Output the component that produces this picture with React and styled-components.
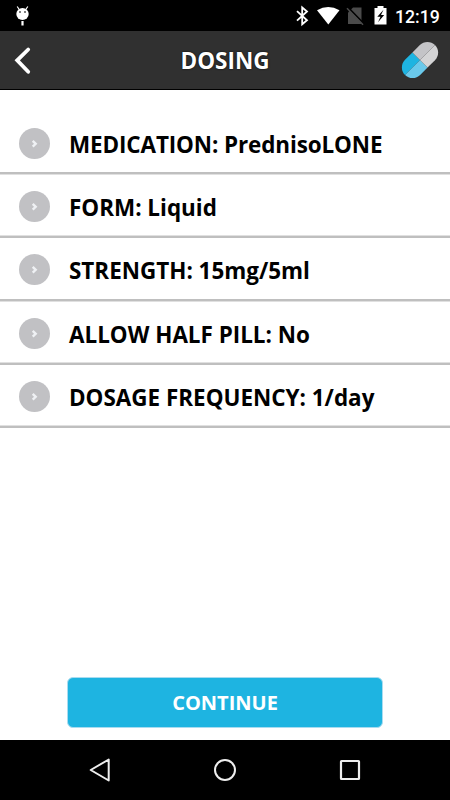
import React from "react";
import styled, { createGlobalStyle } from "styled-components";

const GlobalStyle = createGlobalStyle`
  *, *::before, *::after { box-sizing: border-box; }
  body { margin: 0; background: #fff; }
  svg { display: block; flex: none; }
`;

const Screen = styled.div`
  display: flex;
  flex-direction: column;
  width: 450px;
  height: 800px;
  overflow: hidden;
  background: #fff;
  font-family: "Open Sans", sans-serif;
`;

const StatusBar = styled.div`
  display: flex;
  align-items: center;
  justify-content: space-between;
  height: 31px;
  padding: 0 10px 0 14px;
  background: #000;
`;

const StatusIcons = styled.div`
  display: flex;
  align-items: center;
`;

const Clock = styled.span`
  width: 45px;
  margin-left: 8px;
  padding-top: 3px;
  color: #fff;
  font: 500 17.7px/31px Roboto, sans-serif;
  white-space: nowrap;
`;

const Header = styled.header`
  display: grid;
  grid-template-columns: 60px 1fr 60px;
  align-items: center;
  height: 59px;
  background: #303030;
  border-bottom: 1px solid #000;
`;

const Title = styled.h1`
  margin: 0;
  padding-top: 2px;
  color: #fff;
  font-size: 22.5px;
  font-weight: 700;
  line-height: 56px;
  text-align: center;
  text-shadow: 0 0 2px #000;
`;

const IconButton = styled.button`
  display: flex;
  padding: 0;
  border: 0;
  background: none;
`;

const List = styled.ul`
  flex: 1;
  margin: 0;
  padding: 22px 0 0;
  list-style: none;
`;

const Row = styled.li`
  display: flex;
  flex-direction: column;
  height: ${({ $height }) => $height}px;
`;

const RowContent = styled.div`
  display: flex;
  flex: 1;
  align-items: center;
  gap: 19px;
  padding: 2px 0 0 19px;
`;

const Divider = styled.div`
  height: 3px;
  background: linear-gradient(
    ${({ $softTop }) => ($softTop ? "to top" : "to bottom")},
    #bfbfbf 2px,
    #e0e0e0 2px
  );
`;

const Label = styled.span`
  padding-top: 3px;
  color: #000;
  font-size: 22.45px;
  font-weight: 700;
  line-height: 30px;
  letter-spacing: ${({ $spacing }) => $spacing || 0}px;
  white-space: nowrap;
`;

const Footer = styled.footer`
  display: flex;
  justify-content: center;
  padding-bottom: 12px;
`;

const ContinueButton = styled.button`
  width: 316px;
  height: 51px;
  padding: 0;
  border: 1px solid #a9dcf0;
  border-radius: 6px;
  background: #1eb4e1;
  color: #fff;
  font: 700 20px/49px "Open Sans", sans-serif;
`;

const NavBar = styled.nav`
  display: flex;
  align-items: center;
  justify-content: center;
  gap: 85px;
  height: 60px;
  background: #000;
`;

const rows = [
  { text: "MEDICATION: PrednisoLONE", height: 63, spacing: -0.11 },
  { text: "FORM: Liquid", height: 63, softTop: true },
  { text: "STRENGTH: 15mg/5ml", height: 64 },
  { text: "ALLOW HALF PILL: No", height: 63, softTop: true },
  { text: "DOSAGE FREQUENCY: 1/day", height: 63, softTop: true },
];

const DebugIcon = () => (
  <svg width="17" height="31" viewBox="0 0 17 31">
    <path d="M3.2 6.5l2 3M13.8 6.5l-2 3" stroke="#fff" strokeWidth="1.2" />
    <ellipse cx="8.5" cy="14" rx="6.2" ry="6" fill="#fff" />
    <path d="M5 12h2M10 12h2" stroke="#000" strokeWidth="1.2" />
    <path d="M8.5 21v4.5" stroke="#fff" strokeWidth="2.2" />
  </svg>
);

const StatusGlyphs = () => (
  <svg width="92" height="31" viewBox="295 0 92 31">
    <path d="M297 11.2l10 9.1-4.8 4V7.5l4.8 4-10 9.1" fill="none" stroke="#fff" strokeWidth="1.8" />
    <path d="M317 10.2Q328.3 3.6 339.5 10.2L328.3 24.5Z" fill="#fff" />
    <path d="M353 7.5h8.5v16.5h-13.5v-11.5Z" fill="#4b4b4b" />
    <path d="M348.5 7.8l15.5 16" stroke="#000" strokeWidth="1.8" />
    <path d="M347 8.3l16 16.5" stroke="#4b4b4b" strokeWidth="1.5" />
    <path d="M374.5 8h3V6h6v2h3v16.5h-12Z" fill="#fff" />
    <path d="M383.5 9.8l-6.2 7h3.2l-2.5 5.5 6.2-7.3h-3.2Z" fill="#000" />
  </svg>
);

const BackIcon = () => (
  <svg width="60" height="58" viewBox="0 0 60 58">
    <path d="M28.2 18.5L17.2 29.3l11 11.5" fill="none" stroke="#fff" strokeWidth="3.8" strokeLinecap="round" />
  </svg>
);

const PillIcon = () => (
  <svg width="60" height="58" viewBox="0 0 60 58">
    <g transform="translate(30 29) rotate(-45)">
      <path d="M0-10.7h-10.5a10.7 10.7 0 0 0-10.7 10.7H0Z" fill="#1eb4e1" />
      <path d="M-21.2 0a10.7 10.7 0 0 0 10.7 10.7H0V0Z" fill="#6ac9eb" />
      <path d="M0-10.7h10.5a10.7 10.7 0 0 1 10.7 10.7H0Z" fill="#c4c4c7" />
      <path d="M21.2 0a10.7 10.7 0 0 1-10.7 10.7H0V0Z" fill="#d4d4d5" />
    </g>
  </svg>
);

const RowIcon = () => (
  <svg width="31" height="31" viewBox="0 0 31 31">
    <circle cx="15.5" cy="15.5" r="15.5" fill="#c1c1c4" />
    <path d="M13.7 12.9l3 2.9-3 2.9" fill="none" stroke="#eff1f4" strokeWidth="2.4" />
  </svg>
);

export default function App() {
  return (
    <Screen>
      <GlobalStyle />
      <StatusBar>
        <DebugIcon />
        <StatusIcons>
          <StatusGlyphs />
          <Clock>12:19</Clock>
        </StatusIcons>
      </StatusBar>
      <Header>
        <IconButton aria-label="Back"><BackIcon /></IconButton>
        <Title>DOSING</Title>
        <IconButton aria-label="Medication"><PillIcon /></IconButton>
      </Header>
      <List>
        {rows.map(({ text, height, spacing, softTop }) => (
          <Row key={text} $height={height}>
            <RowContent>
              <RowIcon />
              <Label $spacing={spacing}>{text}</Label>
            </RowContent>
            <Divider $softTop={softTop} />
          </Row>
        ))}
      </List>
      <Footer>
        <ContinueButton>CONTINUE</ContinueButton>
      </Footer>
      <NavBar>
        <svg width="40" height="60" viewBox="0 0 40 60">
          <path d="M10.7 30L28.7 19.5v21Z" fill="none" stroke="#eee" strokeWidth="2" strokeLinejoin="round" />
        </svg>
        <svg width="40" height="60" viewBox="0 0 40 60">
          <circle cx="20" cy="30" r="10" fill="none" stroke="#eee" strokeWidth="2" />
        </svg>
        <svg width="40" height="60" viewBox="0 0 40 60">
          <rect x="11" y="21" width="18" height="18" rx="0.5" fill="none" stroke="#eee" strokeWidth="2.2" />
        </svg>
      </NavBar>
    </Screen>
  );
}
